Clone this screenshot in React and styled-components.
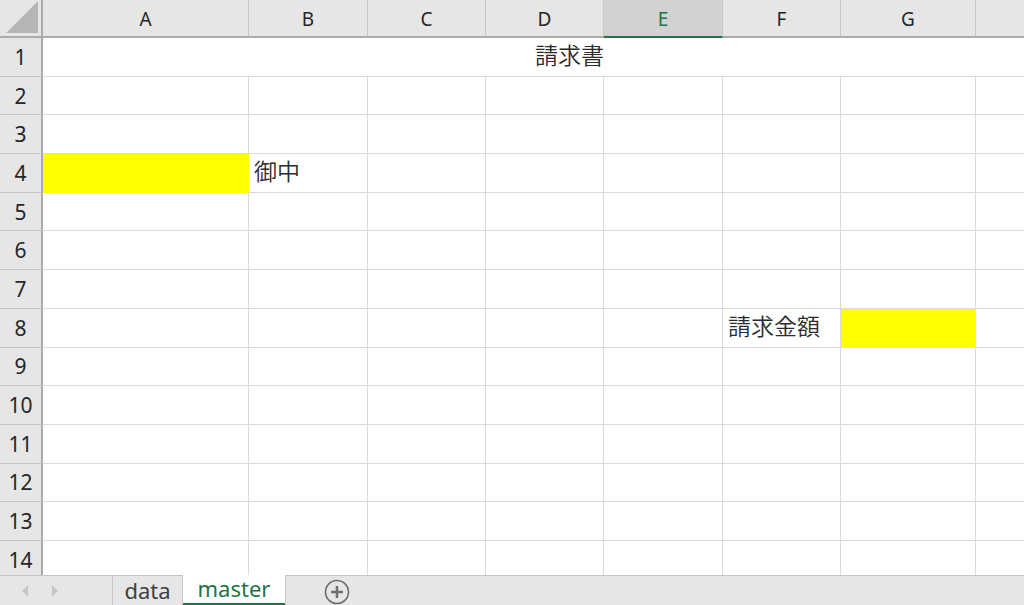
import React from "react";
import styled, { createGlobalStyle, css } from "styled-components";

const Global = createGlobalStyle`
  html, body { margin: 0; padding: 0; background: #ffffff; }
  body { font-family: "Noto Sans CJK JP", "Noto Sans", sans-serif; overflow: hidden; }
`;

const COLS = ["A", "B", "C", "D", "E", "F", "G", "H"];
const COL_W = [206, 119, 118, 118, 119, 118, 135, 121];
const VISIBLE_LABELS = 7;
const ROWS = 14;
const ROW_H = 38.7;
const SELECTED_COL = "E";

const cells = {
  "4-A": { fill: true },
  "4-B": { text: "御中" },
  "8-F": { text: "請求金額" },
  "8-G": { fill: true },
};

const Page = styled.div`
  width: 1024px;
  height: 605px;
  display: flex;
  flex-direction: column;
  overflow: hidden;
`;

const Sheet = styled.div`
  height: 575px;
  overflow: hidden;
  display: grid;
  grid-template-columns: 43px ${COL_W.map((w) => w + "px").join(" ")};
  grid-template-rows: 38px repeat(${ROWS}, ${ROW_H}px);
  width: max-content;
`;

const Corner = styled.div`
  background: #e6e6e6;
  border-right: 2px solid #ababab;
  border-bottom: 2px solid #ababab;
  box-sizing: border-box;
  display: flex;
  align-items: flex-end;
  justify-content: flex-end;
  padding: 0 3px 3px 0;
`;

const ColHead = styled.div`
  background: ${(p) => (p.$selected ? "#d2d2d2" : "#e6e6e6")};
  color: ${(p) => (p.$selected ? "#217346" : "#262626")};
  border-right: 1px solid #c6c6c6;
  border-bottom: 2px solid ${(p) => (p.$selected ? "#217346" : "#ababab")};
  box-sizing: border-box;
  display: flex;
  align-items: center;
  justify-content: center;
  font-family: "Noto Sans", "Liberation Sans", sans-serif;
  font-size: 19px;
  padding-top: 1px;
`;

const RowHead = styled.div`
  background: #e6e6e6;
  color: #262626;
  border-right: 2px solid #ababab;
  border-bottom: 1px solid #c6c6c6;
  box-sizing: border-box;
  display: flex;
  align-items: center;
  justify-content: center;
  font-family: "Noto Sans", "Liberation Sans", sans-serif;
  font-size: 21px;
`;

const Cell = styled.div`
  box-sizing: border-box;
  border-right: 1px solid #dadada;
  border-bottom: 1px solid #dadada;
  display: flex;
  align-items: center;
  padding: 0 0 5px 5px;
  font-size: 23px;
  font-weight: 350;
  color: #2b2b2b;
  white-space: nowrap;
  ${(p) =>
    p.$fill &&
    css`
      background: #ffff00;
      border-right-color: #ffff00;
      border-bottom-color: #ffff00;
    `}
`;

const Merged = styled(Cell)`
  grid-column: 2 / -1;
  justify-content: center;
  padding-left: 0;
`;

const TabBar = styled.div`
  height: 30px;
  display: flex;
  background: #e6e6e6;
  font-family: "Noto Sans", "Liberation Sans", sans-serif;
`;

const Nav = styled.div`
  width: 112px;
  box-sizing: border-box;
  border-top: 1px solid #c6c6c6;
  display: flex;
  align-items: center;
  padding-left: 21px;
  gap: 22px;
`;

const Tab = styled.div`
  box-sizing: border-box;
  display: flex;
  align-items: center;
  justify-content: center;
  font-size: 22px;
  padding-bottom: 2px;
  ${(p) =>
    p.$active
      ? css`
          width: 102px;
          background: #ffffff;
          color: #217346;
          border-bottom: 2px solid #217346;
        `
      : css`
          width: 71px;
          color: #404040;
          border-top: 1px solid #c6c6c6;
          border-left: 1px solid #c6c6c6;
          border-right: 1px solid #c6c6c6;
        `}
`;

const Rest = styled.div`
  flex: 1;
  box-sizing: border-box;
  border-top: 1px solid #c6c6c6;
  border-left: 1px solid #c6c6c6;
  display: flex;
  align-items: center;
  padding-left: 38px;
  padding-top: 3px;
`;

const Arrow = ({ dir }) => (
  <svg width="8" height="12" viewBox="0 0 8 12">
    <path d={dir === "left" ? "M7 0 L1 6 L7 12 Z" : "M1 0 L7 6 L1 12 Z"} fill="#c8c8c8" />
  </svg>
);

const CornerTriangle = () => (
  <svg width="32" height="32" viewBox="0 0 32 32">
    <path d="M32 0 L32 32 L0 32 Z" fill="#b5b5b5" />
  </svg>
);

const AddIcon = () => (
  <svg width="26" height="26" viewBox="0 0 26 26">
    <circle cx="13" cy="13" r="11.5" fill="none" stroke="#6e6e6e" strokeWidth="1.6" />
    <path d="M13 7 V19 M7 13 H19" stroke="#6e6e6e" strokeWidth="2.6" />
  </svg>
);

export default function App() {
  const body = [];
  for (let r = 1; r <= ROWS; r++) {
    body.push(<RowHead key={`h${r}`}>{r}</RowHead>);
    if (r === 1) {
      body.push(<Merged key="m1">請求書</Merged>);
      continue;
    }
    COLS.forEach((c) => {
      const d = cells[`${r}-${c}`] || {};
      body.push(
        <Cell key={`${r}-${c}`} $fill={d.fill}>
          {d.text}
        </Cell>
      );
    });
  }
  return (
    <>
      <Global />
      <Page>
        <Sheet>
          <Corner>
            <CornerTriangle />
          </Corner>
          {COLS.map((c, i) => (
            <ColHead key={c} $selected={c === SELECTED_COL}>
              {i < VISIBLE_LABELS ? c : null}
            </ColHead>
          ))}
          {body}
        </Sheet>
        <TabBar>
          <Nav>
            <Arrow dir="left" />
            <Arrow dir="right" />
          </Nav>
          <Tab>data</Tab>
          <Tab $active>master</Tab>
          <Rest>
            <AddIcon />
          </Rest>
        </TabBar>
      </Page>
    </>
  );
}
